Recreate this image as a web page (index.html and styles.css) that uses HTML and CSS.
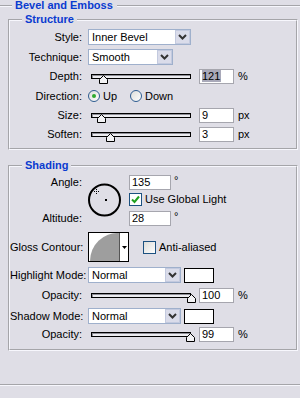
FILE: index.html
```html
<!DOCTYPE html>
<html>
<head>
<meta charset="utf-8">
<link rel="stylesheet" href="styles.css">
</head>
<body>
<fieldset class="panel">
  <legend class="panel-title">Bevel and Emboss</legend>

  <fieldset class="group group-structure">
    <legend class="group-title">Structure</legend>
    <div class="rows rows-structure">
      <div class="row">
        <span class="label">Style:</span>
        <div class="combo combo-style"><span class="combo-text">Inner Bevel</span><span class="combo-btn"><svg width="9" height="6" viewBox="0 0 9 6"><path d="M1 1 L4.5 4.5 L8 1" fill="none" stroke="#333" stroke-width="2"/></svg></span></div>
      </div>
      <div class="row">
        <span class="label">Technique:</span>
        <div class="combo combo-technique"><span class="combo-text">Smooth</span><span class="combo-btn"><svg width="9" height="6" viewBox="0 0 9 6"><path d="M1 1 L4.5 4.5 L8 1" fill="none" stroke="#333" stroke-width="2"/></svg></span></div>
      </div>
      <div class="row">
        <span class="label">Depth:</span>
        <span class="slider"><svg class="thumb" style="left:7px" width="9" height="9" viewBox="0 0 9 9"><polygon points="4.5,0.5 8.5,4.5 8.5,8.5 0.5,8.5 0.5,4.5" fill="#f2f2f4" stroke="#000"/></svg></span>
        <span class="field"><span class="selected">121</span></span>
        <span class="unit">%</span>
      </div>
      <div class="row">
        <span class="label">Direction:</span>
        <span class="radio-item radio-up">
          <svg width="12" height="12" viewBox="0 0 12 12"><defs><linearGradient id="rg1" x1="0" y1="0" x2="1" y2="1"><stop offset="0" stop-color="#dcdcd8"/><stop offset="1" stop-color="#ffffff"/></linearGradient></defs><circle cx="6" cy="6" r="5.5" fill="url(#rg1)" stroke="#2c5a8f"/><circle cx="6" cy="6" r="2" fill="#2faa2f"/></svg>
          <span class="radio-text">Up</span>
        </span>
        <span class="radio-item">
          <svg width="12" height="12" viewBox="0 0 12 12"><defs><linearGradient id="rg2" x1="0" y1="0" x2="1" y2="1"><stop offset="0" stop-color="#dcdcd8"/><stop offset="1" stop-color="#ffffff"/></linearGradient></defs><circle cx="6" cy="6" r="5.5" fill="url(#rg2)" stroke="#2c5a8f"/></svg>
          <span class="radio-text">Down</span>
        </span>
      </div>
      <div class="row">
        <span class="label">Size:</span>
        <span class="slider"><svg class="thumb" style="left:5px" width="9" height="9" viewBox="0 0 9 9"><polygon points="4.5,0.5 8.5,4.5 8.5,8.5 0.5,8.5 0.5,4.5" fill="#f2f2f4" stroke="#000"/></svg></span>
        <span class="field">9</span>
        <span class="unit">px</span>
      </div>
      <div class="row">
        <span class="label">Soften:</span>
        <span class="slider"><svg class="thumb" style="left:14px" width="9" height="9" viewBox="0 0 9 9"><polygon points="4.5,0.5 8.5,4.5 8.5,8.5 0.5,8.5 0.5,4.5" fill="#f2f2f4" stroke="#000"/></svg></span>
        <span class="field">3</span>
        <span class="unit">px</span>
      </div>
    </div>
  </fieldset>

  <fieldset class="group group-shading">
    <legend class="group-title">Shading</legend>
    <div class="rows rows-shading">
      <div class="angle-block">
        <span class="label angle-label">Angle:</span>
        <svg class="dial" width="34" height="34" viewBox="0 0 34 34">
          <circle cx="16.5" cy="17" r="15.5" fill="none" stroke="#000" stroke-width="2"/>
          <rect x="17" y="16" width="2" height="2" fill="#000"/>
          <rect x="8" y="6" width="1" height="1" fill="#000"/>
          <rect x="8" y="10" width="1" height="1" fill="#000"/>
          <rect x="6" y="8" width="1" height="1" fill="#000"/>
          <rect x="10" y="8" width="1" height="1" fill="#000"/>
          <rect x="8" y="8" width="1" height="1" fill="#000"/>
        </svg>
        <span class="angle-input"><span class="field field-wide">135</span><span class="deg">°</span></span>
        <span class="global-light">
          <svg width="13" height="13" viewBox="0 0 13 13"><rect x="0.5" y="0.5" width="12" height="12" fill="#fff" stroke="#1c5180"/><path d="M3 6.5 L5.5 9 L10 3.5" fill="none" stroke="#21a121" stroke-width="2"/></svg>
          <span class="check-text">Use Global Light</span>
        </span>
        <span class="label altitude-label">Altitude:</span>
        <span class="altitude-input"><span class="field field-wide">28</span><span class="deg">°</span></span>
      </div>
      <div class="row">
        <span class="label">Gloss Contour:</span>
        <span class="contour">
          <svg class="contour-preview" width="30" height="28" viewBox="0 0 30 28"><path d="M1 28 A28 28 0 0 1 30 0 L30 28 Z" fill="#9e9e9e"/></svg>
          <span class="contour-btn"><svg width="5" height="3" viewBox="0 0 5 3"><path d="M0 0 H5 L2.5 3 Z" fill="#000"/></svg></span>
        </span>
        <span class="anti-alias">
          <svg width="13" height="13" viewBox="0 0 13 13"><defs><linearGradient id="cg1" x1="0" y1="0" x2="1" y2="1"><stop offset="0" stop-color="#dcdcd8"/><stop offset="1" stop-color="#ffffff"/></linearGradient></defs><rect x="0.5" y="0.5" width="12" height="12" fill="url(#cg1)" stroke="#1c5180"/></svg>
          <span class="check-text">Anti-aliased</span>
        </span>
      </div>
      <div class="row">
        <span class="label">Highlight Mode:</span>
        <div class="combo combo-mode"><span class="combo-text">Normal</span><span class="combo-btn"><svg width="9" height="6" viewBox="0 0 9 6"><path d="M1 1 L4.5 4.5 L8 1" fill="none" stroke="#333" stroke-width="2"/></svg></span></div>
        <span class="swatch"></span>
      </div>
      <div class="row">
        <span class="label">Opacity:</span>
        <span class="slider"><svg class="thumb" style="left:95px" width="9" height="9" viewBox="0 0 9 9"><polygon points="4.5,0.5 8.5,4.5 8.5,8.5 0.5,8.5 0.5,4.5" fill="#f2f2f4" stroke="#000"/></svg></span>
        <span class="field">100</span>
        <span class="unit">%</span>
      </div>
      <div class="row">
        <span class="label">Shadow Mode:</span>
        <div class="combo combo-mode"><span class="combo-text">Normal</span><span class="combo-btn"><svg width="9" height="6" viewBox="0 0 9 6"><path d="M1 1 L4.5 4.5 L8 1" fill="none" stroke="#333" stroke-width="2"/></svg></span></div>
        <span class="swatch"></span>
      </div>
      <div class="row">
        <span class="label">Opacity:</span>
        <span class="slider"><svg class="thumb" style="left:94px" width="9" height="9" viewBox="0 0 9 9"><polygon points="4.5,0.5 8.5,4.5 8.5,8.5 0.5,8.5 0.5,4.5" fill="#f2f2f4" stroke="#000"/></svg></span>
        <span class="field">99</span>
        <span class="unit">%</span>
      </div>
    </div>
  </fieldset>
</fieldset>
</body>
</html>
```

FILE: styles.css
```css
* { box-sizing: border-box; }
html, body { margin: 0; padding: 0; }
body {
  width: 300px;
  height: 398px;
  overflow: hidden;
  background: #dfdee6;
  font-family: "Liberation Sans Narrow", "Liberation Sans", Arial, sans-serif;
  font-size: 11px;
  line-height: 13px;
  color: #000;
}

.panel {
  margin: 0;
  padding: 0 2px 33px 8px;
  border: 0;
  border-top: 2px groove #f7f7fd;
  border-bottom: 2px groove #f7f7fd;
  min-width: 0;
}
.panel-title,
.group-title {
  font-family: "Liberation Sans", Arial, sans-serif;
  font-weight: bold;
  font-size: 11px;
  line-height: 11px;
  color: #0a3bd0;
}
.panel-title { margin-left: 4px; padding: 0 4px 0 3px; }

.group {
  margin: 0;
  border: 2px groove #f7f7fd;
  min-width: 0;
}
.group-title { margin-left: 12px; padding: 0 3px; }
.group-structure { margin-top: 3px; padding: 2px 0 3px; }
.group-shading { margin-top: 10px; padding: 2px 0 7px; }

.rows { display: grid; }
.rows-structure { grid-template-rows: 20px 20px 19px 20px 18px 21px; }
.rows-shading { grid-template-rows: 57px 34px 22px 19px 22px 15px; }

.row { display: flex; align-items: center; }
.label {
  flex: none;
  width: 72px;
  margin-right: 6px;
  text-align: right;
  white-space: nowrap;
}

/* combo boxes */
.combo {
  display: flex;
  align-items: center;
  height: 16px;
  border: 1px solid #9fb0cc;
  background: #fff;
}
.combo-style { width: 103px; }
.combo-technique { width: 85px; }
.combo-mode { width: 93px; }
.combo-text { padding-left: 3px; white-space: nowrap; }
.combo-btn {
  margin-left: auto;
  width: 15px;
  height: 14px;
  display: flex;
  align-items: center;
  justify-content: center;
  border: 1px solid #c3cadf;
  background: #dadcea;
}

/* sliders */
.slider {
  position: relative;
  flex: none;
  width: 100px;
  height: 5px;
  margin-left: 3px;
  border: 1px solid #000;
  background: #ececf0;
  box-shadow: inset 1px 1px 0 #8e8e96;
}
.thumb { position: absolute; top: 0; }

.field {
  flex: none;
  display: block;
  width: 35px;
  height: 15px;
  margin-left: 8px;
  padding-left: 2px;
  border: 1px solid #a6a6ae;
  background: #fff;
  line-height: 13px;
  white-space: nowrap;
}
.field-wide { width: 42px; margin-left: 0; }
.selected { background: #a9a9b9; padding: 0 1px 0 0; }
.unit { margin-left: 4px; }
.deg { margin-left: 3px; align-self: flex-start; line-height: 11px; }

/* radios */
.radio-item { display: flex; align-items: center; }
.radio-up { width: 42px; }
.radio-text { margin-left: 3px; }

/* angle block */
.angle-block {
  display: grid;
  grid-template-columns: 78px 41px auto;
  grid-template-rows: 19px 15px 23px;
}
.angle-label { grid-column: 1; grid-row: 1; align-self: center; }
.altitude-label { grid-column: 1; grid-row: 3; align-self: center; }
.dial { grid-column: 2; grid-row: 1 / 4; align-self: start; margin-top: 10px; display: block; }
.angle-input, .altitude-input { grid-column: 3; display: flex; align-items: center; }
.angle-input { grid-row: 1; align-self: center; }
.altitude-input { grid-row: 3; align-self: center; }
.global-light { grid-column: 3; grid-row: 2; display: flex; align-items: center; }
.check-text { margin-left: 3px; white-space: nowrap; }

/* gloss contour */
.contour {
  display: flex;
  width: 41px;
  height: 30px;
  border: 1px solid #000;
  background: #fff;
}
.contour-preview { display: block; }
.contour-btn {
  flex: 1;
  display: flex;
  align-items: center;
  justify-content: center;
  border-left: 1px solid #555;
  background: #fff;
}
.anti-alias { display: flex; align-items: center; margin-left: 14px; }

.swatch {
  width: 30px;
  height: 15px;
  margin-left: 3px;
  border: 1px solid #000;
  background: #fff;
}
```
